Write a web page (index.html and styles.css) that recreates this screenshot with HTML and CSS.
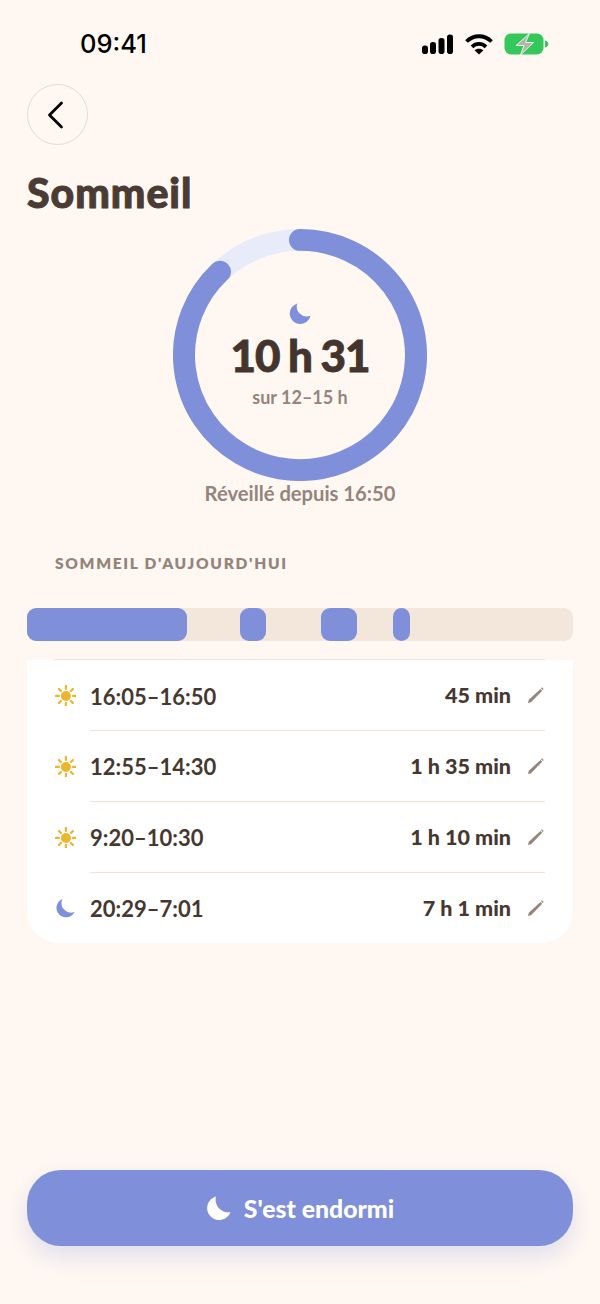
FILE: index.html

```html
<!DOCTYPE html>
<html lang="fr">
<head>
  <meta charset="UTF-8" />
  <meta name="viewport" content="width=device-width, initial-scale=1.0" />
  <title>Sommeil</title>
  <link rel="stylesheet" href="styles.css">
</head>
<body>
  <div class="page">
    <div class="status-bar">
      <span class="time">09:41</span>
      <div class="status-icons">
        <svg width="32" height="22" viewBox="0 0 32 22"><rect x="0" y="12.500" width="6" height="8.500" rx="2.800"/><rect x="8" y="9" width="6" height="12" rx="2.800"/><rect x="16.500" y="5" width="6" height="16" rx="2.800"/><rect x="25" y="1.500" width="6" height="19.500" rx="2.800"/></svg>
        <svg width="28" height="22" viewBox="0 0 28 22" fill="none" stroke="#000" stroke-width="3.800"><path d="M1.500 8.500C8.500 1.500 19.500 1.500 26.500 8.500"/><path d="M7 13.800C11 10 17 10 21 13.800"/><path d="M14 21.500l-4.500-4.200c2.400-2.200 6.600-2.200 9 0z" fill="#000" stroke="none"/></svg>
        <svg width="45" height="22" viewBox="0 0 45 22"><rect x="0.500" y="0.500" width="39" height="21" rx="6.500" fill="#34c759"/><path d="M41 7.500c2 .4 3.300 1.800 3.300 3.500s-1.300 3.100-3.300 3.500z" fill="#34c759"/><path d="M25.500 0.500L12 12.500h8l-3.500 9.500 13-12.500h-8z" fill="#b4b4b0" stroke="#e9f5e4" stroke-width="1"/></svg>
      </div>
    </div>

    <button class="back-btn">
      <svg width="20" height="28" viewBox="0 0 20 28" fill="none" stroke="#000" stroke-width="2.800" stroke-linecap="round" stroke-linejoin="round"><path d="M15.500 2L3.500 14l12 12"/></svg>
    </button>

    <h1 class="title">Sommeil</h1>

    <div class="ring">
      <svg class="ring-svg" width="254" height="252" viewBox="0 0 254 254" preserveAspectRatio="none" fill="none" stroke-width="22">
        <circle cx="127" cy="127" r="116" stroke="#e8ebfa"/>
        <path d="M127 11A116 116 0 1 1 47 43" stroke="#7f8fda" stroke-linecap="round"/>
      </svg>
      <div class="ring-text">
        <svg class="moon-small" width="22" height="22" viewBox="0 0 24 24"><path d="M9 1.500A11.500 11.500 0 1 0 23.500 15 11 11 0 0 1 9 1.500z" fill="#7f8fda"/></svg>
        <div class="total">10 h 31</div>
        <div class="goal">sur 12–15 h</div>
      </div>
    </div>
    <div class="awake">Réveillé depuis 16:50</div>

    <div class="section-label">SOMMEIL D'AUJOURD'HUI</div>

    <div class="timeline">
      <div class="seg" style="left:0;width:160px"></div>
      <div class="seg" style="left:213px;width:26px"></div>
      <div class="seg" style="left:294px;width:36px"></div>
      <div class="seg" style="left:366px;width:17px"></div>
    </div>

    <div class="card">
      <div class="row row-first">
        <svg class="row-icon" width="22" height="22" viewBox="-1 -1 24 24"><use href="#sun"/></svg>
        <span class="range">16:05–16:50</span>
        <span class="duration">45 min</span>
        <svg class="pencil" width="18" height="18" viewBox="0 0 18 18"><use href="#pencil"/></svg>
      </div>
      <div class="row">
        <svg class="row-icon" width="22" height="22" viewBox="-1 -1 24 24"><use href="#sun"/></svg>
        <span class="range">12:55–14:30</span>
        <span class="duration">1 h 35 min</span>
        <svg class="pencil" width="18" height="18" viewBox="0 0 18 18"><use href="#pencil"/></svg>
      </div>
      <div class="row">
        <svg class="row-icon" width="22" height="22" viewBox="-1 -1 24 24"><use href="#sun"/></svg>
        <span class="range">9:20–10:30</span>
        <span class="duration">1 h 10 min</span>
        <svg class="pencil" width="18" height="18" viewBox="0 0 18 18"><use href="#pencil"/></svg>
      </div>
      <div class="row">
        <svg class="row-icon" width="22" height="22" viewBox="0 0 22 22"><path d="M8.500 2A9.500 9.500 0 1 0 20.500 15 9.500 9.500 0 0 1 8.500 2z" fill="#7f8fda"/></svg>
        <span class="range">20:29–7:01</span>
        <span class="duration">7 h 1 min</span>
        <svg class="pencil" width="18" height="18" viewBox="0 0 18 18"><use href="#pencil"/></svg>
      </div>
    </div>

    <button class="main-btn">
      <svg width="26" height="26" viewBox="0 0 26 26"><path d="M10 1.500A12 12 0 1 0 24.500 17 12.500 12.500 0 0 1 10 1.500z" fill="#fff"/></svg>
      <span>S'est endormi</span>
    </button>
  </div>

  <svg class="defs" width="0" height="0">
    <symbol id="sun" viewBox="0 0 22 22">
      <circle cx="11" cy="11" r="5" fill="#ecb52f"/>
      <path d="M11 1v3M11 18v3M1 11h3M18 11h3M4 4l2 2M16 16l2 2M18 4l-2 2M6 16l-2 2" stroke="#ecb52f" stroke-width="2.200" stroke-linecap="round"/>
    </symbol>
    <symbol id="pencil" viewBox="0 0 18 18">
      <path d="M1 17l.8-3.200L13.500 3l1.700 1.700L4 16.200z" fill="#94847b"/>
      <path d="M14.500 1.800l1.700 1.700" stroke="#94847b" stroke-width="1.300"/>
    </symbol>
  </svg>
</body>
</html>
```

FILE: styles.css

```css
* {
  box-sizing: border-box;
}
body {
  margin: 0;
  background-color: #fff8f2;
  color: #463830;
  font-family: 'Lato', 'Noto Sans', sans-serif;
}
.page {
  width: 600px;
  height: 1304px;
  padding: 0 27px;
  display: flex;
  flex-direction: column;
  overflow: hidden;
}
.defs {
  display: block;
}
.status-bar {
  height: 84px;
  padding: 26px 24px 0 53px;
  display: flex;
  justify-content: space-between;
  align-items: flex-start;
}
.time {
  font-family: 'Inter', sans-serif;
  font-size: 25.500px;
  line-height: 36px;
  font-weight: 500;
  color: #000;
}
.status-icons {
  height: 36px;
  display: flex;
  align-items: center;
  gap: 11px;
}
.back-btn {
  width: 61px;
  height: 61px;
  padding: 0 3px 0 0;
  border: 1px solid #e3dad3;
  border-radius: 50%;
  background: transparent;
  display: flex;
  align-items: center;
  justify-content: center;
}
.title {
  margin: 23px 0 0;
  font-size: 41px;
  line-height: 50px;
  font-weight: 900;
  letter-spacing: 1px;
  color: #4a3c34;
  -webkit-text-stroke: 1px #4a3c34;
  paint-order: stroke fill;
}
.ring {
  width: 254px;
  height: 252px;
  margin: 11px auto 0;
  display: grid;
  place-items: center;
}
.ring-svg, .ring-text {
  grid-area: 1 / 1;
}
.ring-text {
  display: flex;
  flex-direction: column;
  align-items: center;
}
.moon-small {
  margin-bottom: 5px;
}
.total {
  font-size: 44px;
  line-height: 52px;
  font-weight: 900;
  letter-spacing: -1px;
  word-spacing: -1px;
  color: #43352e;
  -webkit-text-stroke: 0.800px #43352e;
}
.goal {
  margin-top: 5px;
  font-size: 18px;
  line-height: 22px;
  font-weight: 700;
  color: #94847b;
}
.awake {
  text-align: center;
  font-size: 20.200px;
  line-height: 24px;
  font-weight: 700;
  color: #94847b;
}
.section-label {
  margin: 48px 0 0 28px;
  font-size: 15.500px;
  line-height: 20px;
  font-weight: 800;
  letter-spacing: 1.700px;
  color: #94847b;
}
.timeline {
  position: relative;
  height: 33px;
  margin-top: 35px;
  background-color: #f3e6da;
  border-radius: 9px;
}
.seg {
  position: absolute;
  top: 0;
  bottom: 0;
  background-color: #7f8fda;
  border-radius: 9px;
}
.card {
  margin-top: 19px;
  height: 283px;
  padding: 0 28px 0 27px;
  background-color: #fff;
  border-radius: 0 0 32px 32px;
}
.row {
  height: 71px;
  position: relative;
  display: flex;
  align-items: center;
  gap: 14px;
}
.row::before {
  content: "";
  position: absolute;
  top: 0;
  left: 36px;
  right: 0;
  height: 1px;
  background-color: #f6e3d0;
}
.row-first {
  height: 70px;
}
.row-first::before {
  left: 0;
  top: -1px;
}
.range {
  flex: 1;
  padding-top: 2px;
  font-size: 22px;
  font-weight: 700;
}
.duration {
  font-size: 21.500px;
  font-weight: 900;
}
.pencil {
  margin-left: 2px;
}
.main-btn {
  margin-top: 227px;
  height: 76px;
  flex-shrink: 0;
  border: none;
  border-radius: 34px;
  background-color: #7f8fda;
  color: #fff;
  font-family: inherit;
  font-size: 24.800px;
  font-weight: 900;
  display: flex;
  align-items: center;
  justify-content: center;
  gap: 12px;
  box-shadow: 0 10px 24px #7f8fda40;
}
```
